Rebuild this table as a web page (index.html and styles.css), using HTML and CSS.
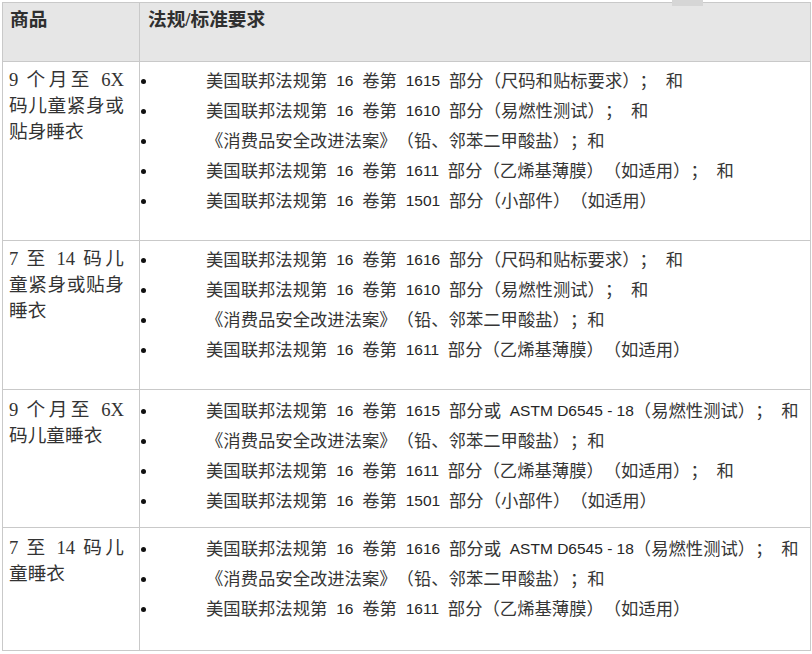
FILE: index.html
```html
<!DOCTYPE html>
<html lang="zh-CN">
<head>
<meta charset="utf-8">
<title>儿童睡衣法规要求</title>
<link rel="stylesheet" href="styles.css">
</head>
<body>
<div class="page">
  <table class="reg">
    <colgroup><col class="c1"><col class="c2"></colgroup>
    <thead>
      <tr class="head">
        <th class="h-prod">商品</th>
        <th class="h-req">法规/标准要求</th>
      </tr>
    </thead>
    <tbody>
      <tr class="r1">
        <td class="prod">9 个月至 6X 码儿童紧身或贴身睡衣</td>
        <td class="req">
          <ul class="list">
            <li>美国联邦法规第 <span class="n">16</span> 卷第 <span class="n">1615</span> 部分（尺码和贴标要求）； 和</li>
            <li>美国联邦法规第 <span class="n">16</span> 卷第 <span class="n">1610</span> 部分（易燃性测试）； 和</li>
            <li>《消费品安全改进法案》（铅、邻苯二甲酸盐）；和</li>
            <li>美国联邦法规第 <span class="n">16</span> 卷第 <span class="n">1611</span> 部分（乙烯基薄膜）（如适用）； 和</li>
            <li>美国联邦法规第 <span class="n">16</span> 卷第 <span class="n">1501</span> 部分（小部件）（如适用）</li>
          </ul>
        </td>
      </tr>
      <tr class="r2">
        <td class="prod">7 至 14 码儿童紧身或贴身睡衣</td>
        <td class="req">
          <ul class="list">
            <li>美国联邦法规第 <span class="n">16</span> 卷第 <span class="n">1616</span> 部分（尺码和贴标要求）； 和</li>
            <li>美国联邦法规第 <span class="n">16</span> 卷第 <span class="n">1610</span> 部分（易燃性测试）； 和</li>
            <li>《消费品安全改进法案》（铅、邻苯二甲酸盐）；和</li>
            <li>美国联邦法规第 <span class="n">16</span> 卷第 <span class="n">1611</span> 部分（乙烯基薄膜）（如适用）</li>
          </ul>
        </td>
      </tr>
      <tr class="r3">
        <td class="prod low">9 个月至 6X 码儿童睡衣</td>
        <td class="req low">
          <ul class="list">
            <li>美国联邦法规第 <span class="n">16</span> 卷第 <span class="n">1615</span> 部分或 <span class="n">ASTM D6545 - 18</span>（易燃性测试）； 和</li>
            <li>《消费品安全改进法案》（铅、邻苯二甲酸盐）；和</li>
            <li>美国联邦法规第 <span class="n">16</span> 卷第 <span class="n">1611</span> 部分（乙烯基薄膜）（如适用）； 和</li>
            <li>美国联邦法规第 <span class="n">16</span> 卷第 <span class="n">1501</span> 部分（小部件）（如适用）</li>
          </ul>
        </td>
      </tr>
      <tr class="r4">
        <td class="prod low">7 至 14 码儿童睡衣</td>
        <td class="req low">
          <ul class="list">
            <li>美国联邦法规第 <span class="n">16</span> 卷第 <span class="n">1616</span> 部分或 <span class="n">ASTM D6545 - 18</span>（易燃性测试）； 和</li>
            <li>《消费品安全改进法案》（铅、邻苯二甲酸盐）；和</li>
            <li>美国联邦法规第 <span class="n">16</span> 卷第 <span class="n">1611</span> 部分（乙烯基薄膜）（如适用）</li>
          </ul>
        </td>
      </tr>
    </tbody>
  </table>
  <div class="thumb"></div>
</div>
</body>
</html>
```

FILE: styles.css
```css
html, body {
  margin: 0;
  padding: 0;
  background: #ffffff;
}

.page {
  position: relative;
  width: 812px;
  height: 654px;
  overflow: hidden;
}

.reg {
  border-collapse: collapse;
  table-layout: fixed;
  width: 808px;
  margin: 2px 0 0 2px;
  color: #333333;
}

.c1 { width: 137px; }
.c2 { width: 671px; }

.reg th,
.reg td {
  border: 1px solid #c9c9c9;
  vertical-align: top;
  text-align: left;
}

.head { height: 59px; }
.r1 { height: 179px; }
.r2 { height: 149px; }
.r3 { height: 138px; }
.r4 { height: 123px; }

.reg th {
  background: #e6e6e6;
  font-family: "Liberation Serif", "Noto Sans CJK SC", serif;
  font-weight: bold;
  font-size: 18.67px;
  line-height: 26px;
  padding: 4px 8px 0 7px;
  color: #2f2f2f;
}

.reg th.h-req {
  padding-left: 8px;
}

.prod {
  font-family: "Liberation Serif", "Noto Sans CJK SC", serif;
  font-size: 18.67px;
  line-height: 26px;
  padding: 5px 15px 0 6px;
}

.reg td.prod { text-align: justify; }

.req {
  padding: 4px 0 0 0;
}

.prod.low { padding-top: 7px; }
.req.low { padding-top: 6px; }

.list {
  list-style: none;
  margin: 0;
  padding: 0;
}

.list li {
  display: flex;
  align-items: center;
  white-space: pre;
  font-family: "Liberation Sans", "Noto Sans CJK SC", sans-serif;
  font-size: 17.33px;
  line-height: 30px;
  word-spacing: 4px;
  text-spacing-trim: space-all;
  color: #363636;
}

.list li::before {
  content: "";
  flex: none;
  width: 5px;
  height: 5px;
  border-radius: 50%;
  background: #111111;
  margin: 0 60px 0 1px;
}

.n {
  font-family: "Liberation Sans", sans-serif;
  font-size: 15.5px;
  word-spacing: 0;
  color: #262626;
}

.thumb {
  position: absolute;
  top: 0;
  left: 672px;
  width: 31px;
  height: 6px;
  background: #d6d6d6;
}
```
